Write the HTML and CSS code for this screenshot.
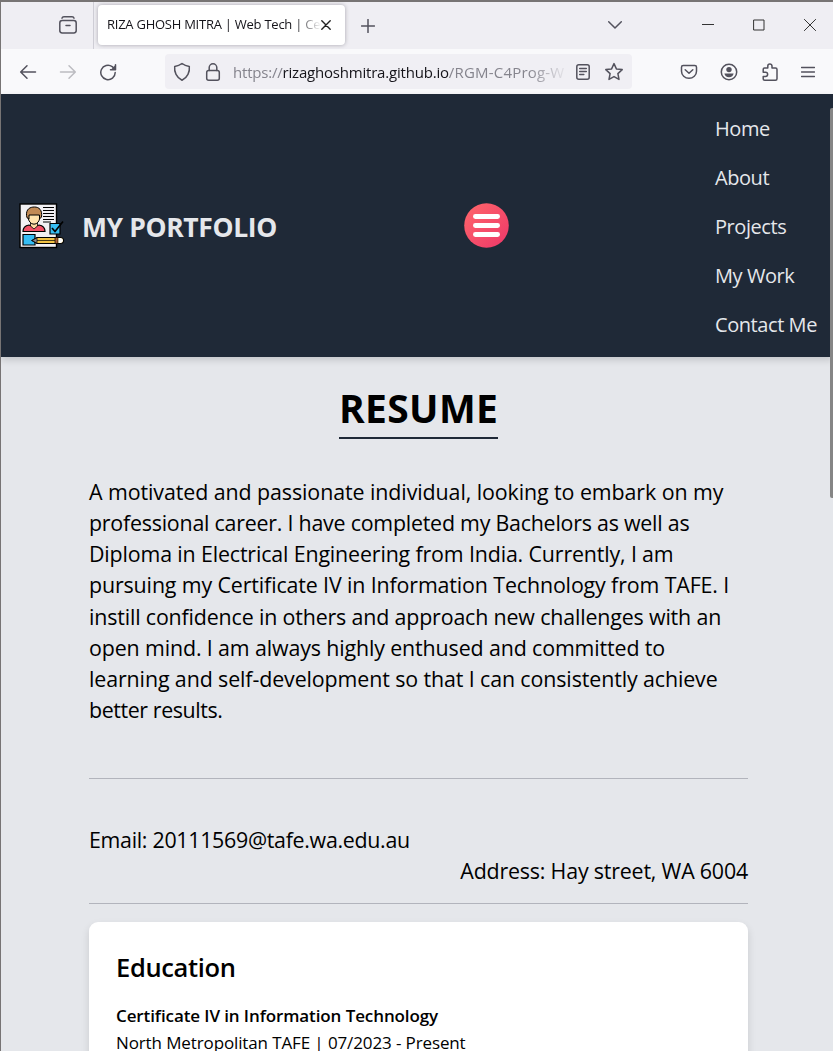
FILE: index.html
```html
<!DOCTYPE html>
<html lang="en">
<head>
<meta charset="utf-8">
<title>RIZA GHOSH MITRA | Web Tech</title>
<link rel="stylesheet" href="styles.css">
</head>
<body>
<div class="window">
  <div class="tabbar">
    <div class="tab-left">
      <svg class="icon" width="20" height="20" viewBox="0 0 20 20"><path d="M4 3.2Q4.3 1.8 6 1.8H14Q15.7 1.8 16 3.2"/><rect x="1.8" y="5.6" width="16.4" height="12.4" rx="2.4"/><path d="M8 10.4H12"/></svg>
    </div>
    <div class="tab"><span class="tab-title">RIZA GHOSH MITRA | Web Tech | Ce</span>
      <svg class="icon dark" width="10" height="10" viewBox="0 0 10 10"><path d="M.8.8 9.2 9.2M9.2.8.8 9.2"/></svg>
    </div>
    <svg class="icon plus" width="14" height="14" viewBox="0 0 14 14"><path d="M7 .5V13.5M.5 7H13.5"/></svg>
    <svg class="icon chevron" width="14" height="8" viewBox="0 0 14 8"><path d="M.7.8 7 7 13.3.8"/></svg>
    <div class="controls">
      <svg class="icon thin" width="12" height="12" viewBox="0 0 12 12"><path d="M0 5.5H12"/></svg>
      <svg class="icon thin" width="12" height="12" viewBox="0 0 12 12"><rect x="1" y="1" width="10" height="10"/></svg>
      <svg class="icon thin" width="12" height="12" viewBox="0 0 12 12"><path d="M.4.4 11.6 11.6M11.6.4.4 11.6"/></svg>
    </div>
  </div>
  <div class="toolbar">
    <div class="history">
      <svg class="icon" width="18" height="18" viewBox="0 0 18 18"><path d="M16.5 9H2M8 2.7 1.7 9 8 15.3"/></svg>
      <svg class="icon faded" width="18" height="18" viewBox="0 0 18 18"><path d="M1.5 9H16M10 2.7 16.3 9 10 15.3"/></svg>
      <svg class="icon" width="18" height="18" viewBox="0 0 18 18"><path d="M16.2 9.5A7.2 7.2 0 1 1 13.2 3.6L16.5 6.5M16.5 1.8V6.7H11.5"/><path class="solid" d="M16.5 2V6.7H11.8Z"/></svg>
    </div>
    <div class="urlbar">
      <svg class="icon" width="18" height="20" viewBox="0 0 18 20"><path d="M9 1.5Q12 3.8 16.3 4.4C17 9.8 14.5 15.6 9 18.2 3.5 15.6 1 9.8 1.7 4.4Q6 3.8 9 1.5Z"/></svg>
      <svg class="icon lock" width="16" height="20" viewBox="0 0 16 20"><rect x="1.7" y="8.5" width="12.6" height="9.8" rx="2"/><path d="M4.2 8.5V5.6A3.8 3.8 0 0 1 11.8 5.6V8.5"/></svg>
      <span class="url">https://<b>rizaghoshmitra.github.io</b><span class="path">/RGM-C4Prog-W</span></span>
      <svg class="icon" width="14" height="16" viewBox="0 0 14 16"><rect x=".8" y=".8" width="12.4" height="14.4" rx="2"/><path d="M3.7 4.5H10.3M3.7 7.5H10.3M3.7 10.5H7.8"/></svg>
      <svg class="icon star" width="20" height="20" viewBox="0 0 20 20"><path d="M10 1.6 12.4 6.9 18.2 7.6 13.9 11.6 15 17.4 10 14.6 5 17.4 6.1 11.6 1.8 7.6 7.6 6.9Z"/></svg>
    </div>
    <div class="actions">
      <svg class="icon" width="18" height="18" viewBox="0 0 18 18"><path d="M3.2 2.5H14.8Q16.5 2.5 16.5 4.2V8.2A7.5 7.1 0 0 1 1.5 8.2V4.2Q1.5 2.5 3.2 2.5ZM5.2 6.8 9 10.3 12.8 6.8"/></svg>
      <svg class="icon" width="18" height="18" viewBox="0 0 18 18"><circle cx="9" cy="9" r="7.7"/><circle class="solid" cx="9" cy="6.6" r="2.7"/><path class="solid" d="M4.4 10.6H13.6Q12.9 14.2 9 14.2T4.4 10.6Z"/></svg>
      <svg class="icon" width="18" height="20" viewBox="0 0 18 20"><path d="M2.2 8.6V7.4Q2.2 6.1 3.5 6.1H6.8V4A2 2 0 0 1 11 4V6.1H14.5Q16 6.1 16 7.6V16.7Q16 18.2 14.5 18.2H3.7Q2.2 18.2 2.2 16.7V14.5H4.5A2 2 0 0 0 4.5 10.2H2.2Z"/></svg>
      <svg class="icon" width="14" height="12" viewBox="0 0 14 12"><path d="M.5 1.5H13.5M.5 6H13.5M.5 10.5H13.5"/></svg>
    </div>
  </div>
  <div class="page">
    <header class="nav">
      <svg class="logo" width="46" height="46" viewBox="0 0 46 46">
        <rect x="1" y="1" width="36.5" height="43.5" fill="#f2f0f3" stroke="#000" stroke-width="1.4"/>
        <path d="M24 4.5H35M24 7.5H35M24 10.5H35M24 13.5H35M24 16.5H35M24 19H32" stroke="#000" stroke-width="1.1"/>
        <path d="M4 28.5Q4 23 10 22L15 24 20 22Q26 23 26 28.5Z" fill="#f04e64" stroke="#000" stroke-width="1.2"/>
        <path d="M11.5 19V23L15 26 18.5 23V19Z" fill="#fbd8a0" stroke="#000" stroke-width=".8"/>
        <ellipse cx="15" cy="14.5" rx="5.7" ry="6.7" fill="#ffe3ad" stroke="#000"/>
        <path d="M7.5 12.5C7 6 11 4 15.5 4S23.5 7 22.5 14L20.5 16V12H10V16Q7.5 15.5 7.5 12.5Z" fill="#c18a55" stroke="#000"/>
        <path d="M4 31.5H16V42H4Z" fill="#36bdf3" stroke="#000" stroke-width="1.2"/>
        <path d="M31 20.5H41V31H31Z" fill="#36bdf3" stroke="#000" stroke-width="1.2"/>
        <path d="M33 25 36 28.5 44 18.5" fill="none" stroke="#000" stroke-width="1.7"/>
        <path d="M13 37.5 18 34.5H41Q44.5 34.5 44.5 37.5T41 40.5H18Z" fill="#f2c244" stroke="#000" stroke-width="1.2"/>
        <path d="M18 37.5H37" stroke="#000" stroke-width=".7"/>
        <path d="M36 34.5V40.5H39V34.5Z" fill="#ac6235" stroke="#000" stroke-width=".7"/>
        <path d="M39.5 35H41.5Q44 35.3 44 37.5T41.5 40H39.5Z" fill="#fff"/>
        <path d="M13 37.5 18 34.8V40.2Z" fill="#8b8c90" stroke="#000" stroke-width=".7"/>
      </svg>
      <span class="brand">MY PORTFOLIO</span>
      <svg class="burger" width="45" height="45" viewBox="0 0 45 45"><defs><linearGradient id="g" x1="0" y1="0" x2="1" y2="1"><stop stop-color="#ff676a"/><stop offset="1" stop-color="#ed3769"/></linearGradient></defs><circle cx="22.5" cy="22.5" r="22.3" fill="url(#g)"/><path d="M11.4 13.5H33.6M11.4 22.5H33.6M11.4 31.5H33.6" stroke="#fff" stroke-width="4.8" stroke-linecap="round"/></svg>
      <nav class="links"><a>Home</a><a>About</a><a>Projects</a><a>My Work</a><a>Contact Me</a></nav>
    </header>
    <main class="content">
      <h1>RESUME</h1>
      <div class="intro">
        <div class="l1">A motivated and passionate individual, looking to embark on my</div>
        <div class="l2">professional career. I have completed my Bachelors as well as</div>
        <div class="l3">Diploma in Electrical Engineering from India. Currently, I am</div>
        <div class="l4">pursuing my Certificate IV in Information Technology from TAFE. I</div>
        <div class="l5">instill confidence in others and approach new challenges with an</div>
        <div class="l6">open mind. I am always highly enthused and committed to</div>
        <div class="l7">learning and self-development so that I can consistently achieve</div>
        <div class="l8">better results.</div>
      </div>
      <div class="contact"><div class="email">Email: 20111569@tafe.wa.edu.au</div><div class="address">Address: Hay street, WA 6004</div></div>
      <section class="card">
        <h2>Education</h2>
        <h3>Certificate IV in Information Technology</h3>
        <p>North Metropolitan TAFE | 07/2023 - Present</p>
      </section>
    </main>
    <div class="scrollbar"></div>
  </div>
</div>
</body>
</html>
```
FILE: styles.css
```css
* { box-sizing: border-box; }
body { margin: 0; font-family: "Open Sans", "Noto Sans", sans-serif; color: #000; }
.window { width: 833px; height: 1051px; overflow: hidden; border-top: 2px solid #777474; border-left: 1px solid #777474; background: #e5e7eb; }
.icon { fill: none; stroke: #53525d; stroke-width: 1.5; stroke-linecap: round; stroke-linejoin: round; flex: none; display: block; }
.icon .solid { fill: #53525d; stroke: none; }
.icon.dark { stroke: #222; stroke-width: 1.4; }
.icon.thin { stroke: #333; stroke-width: 1; }
.icon.faded { stroke: #bcbcc1; }
.tabbar { height: 47px; background: #efeef3; display: flex; align-items: center; }
.tab-left { width: 93px; height: 47px; padding: 13px 0 0 57px; border-right: 1px solid #cfced6; }
.tab { width: 247px; height: 40px; margin: 0 0 1px 3.5px; background: #fff; border-radius: 4px; box-shadow: 0 0 4px #77757f99; display: flex; align-items: center; padding-left: 9.5px; }
.tab-title { width: 214px; margin-top: -2px; overflow: hidden; white-space: nowrap; font-size: 13px; letter-spacing: -.25px; color: #15141a; -webkit-mask-image: linear-gradient(90deg, #000 188px, transparent 214px); mask-image: linear-gradient(90deg, #000 188px, transparent 214px); }
.plus { margin-left: 16.5px; }
.chevron { margin-left: 233px; margin-top: -2px; }
.controls { display: flex; gap: 39px; margin: -2px 0 0 80px; }
.toolbar { height: 45px; background: #f9f9fb; display: flex; align-items: center; }
.history { display: flex; gap: 22px; width: 164px; padding-left: 18px; }
.urlbar { width: 467px; height: 35px; background: #f0eff4; border-radius: 4px; display: flex; align-items: center; padding-left: 8px; }
.lock { margin-left: 14px; }
.url { width: 334px; margin: 0 9px 0 12px; overflow: hidden; white-space: nowrap; font-size: 15px; letter-spacing: -.2px; color: #85848d; -webkit-mask-image: linear-gradient(90deg, #000 295px, transparent 336px); mask-image: linear-gradient(90deg, #000 295px, transparent 336px); }
.url b { font-weight: 400; color: #15141a; }
.path { letter-spacing: .2px; }
.star { margin-left: 14px; }
.actions { display: flex; align-items: center; gap: 22.5px; margin-left: 47.5px; }
.page { position: relative; height: 957px; }
.nav { height: 263px; background: #1f2937; display: flex; align-items: center; padding-left: 18px; color: #e5e7eb; box-shadow: 0 3px 7px #00000026; }
.brand { width: 382px; margin: 3px 0 0 17px; font-size: 26.5px; letter-spacing: -.38px; font-weight: 700; white-space: nowrap; }
.burger { flex: none; }
.links { margin-left: 206px; display: flex; flex-direction: column; font-size: 20px; letter-spacing: -.43px; line-height: 49px; white-space: nowrap; padding-top: 2px; }
.content { padding: 26px 85px 0 88px; }
h1 { margin: 0 auto; width: 159px; height: 56px; border-bottom: 2px solid #1f2937; font-size: 39px; letter-spacing: .35px; line-height: 49px; font-weight: 700; white-space: nowrap; }
.intro { height: 340px; padding-top: 37px; border-bottom: 1px solid #b2b4bc; font-size: 21.4px; line-height: 31.15px; white-space: nowrap; }
.l1 { letter-spacing: -.08px; }
.l2 { letter-spacing: -.23px; }
.l3 { letter-spacing: -.15px; }
.l4 { letter-spacing: -.13px; }
.l5 { letter-spacing: -.16px; }
.l6 { letter-spacing: -.13px; }
.l7 { letter-spacing: -.11px; }
.l8 { letter-spacing: -.4px; }
.contact { height: 125px; padding-top: 45px; border-bottom: 1px solid #b2b4bc; font-size: 21.4px; line-height: 31.15px; white-space: nowrap; }
.email { letter-spacing: -.3px; }
.address { text-align: right; letter-spacing: -.19px; }
.card { height: 200px; margin-top: 18px; padding: 27px; background: #fff; border-radius: 9px; box-shadow: 0 4px 9px #0000001f; white-space: nowrap; }
h2 { margin: 0; font-size: 25.5px; letter-spacing: -.35px; line-height: 36px; font-weight: 600; }
h3 { margin: 17px 0 0; font-size: 17px; letter-spacing: -.1px; line-height: 27px; font-weight: 600; }
p { margin: 0; font-size: 17px; letter-spacing: -.12px; line-height: 27px; }
.scrollbar { position: absolute; right: 0; top: 14px; width: 3px; height: 390px; background: #858585; border-radius: 2px 0 0 2px; }
```
